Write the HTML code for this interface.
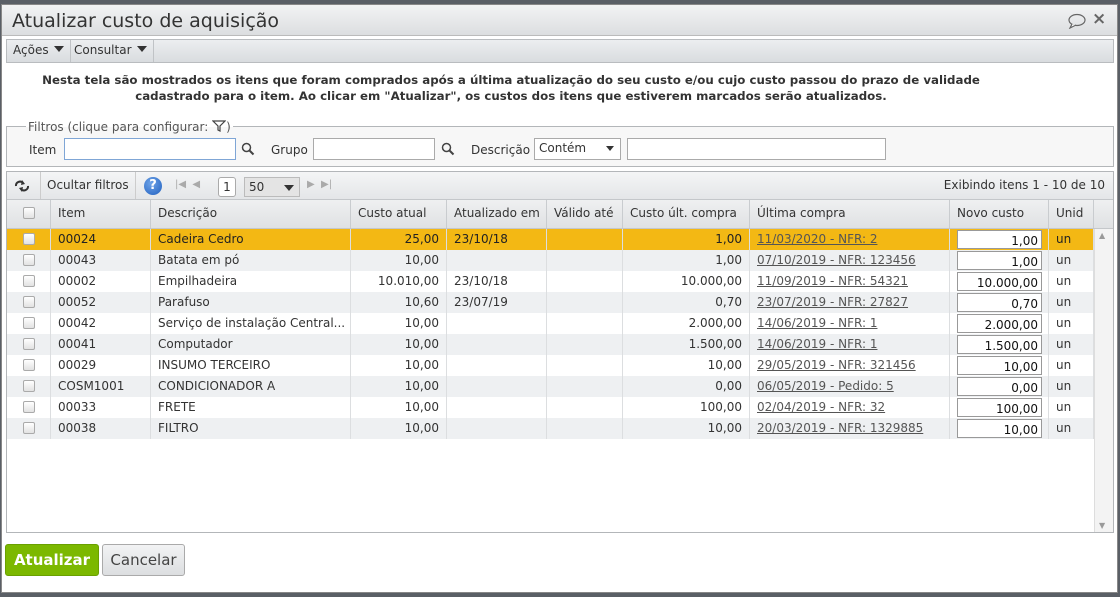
<!DOCTYPE html>
<html><head><meta charset="utf-8"><style>
*{box-sizing:border-box;margin:0;padding:0}
body{width:1120px;height:597px;background:#5a5f66;font-family:"DejaVu Sans","Liberation Sans",sans-serif;font-size:12px;color:#333;position:relative;overflow:hidden}
.dlg{position:absolute;left:1px;top:4px;width:1117px;height:589px;background:#fff;border:1px solid #888;}
.title{position:absolute;left:0;top:0;width:100%;height:31px;background:linear-gradient(#f2f3f4,#dcdee0);border-bottom:1px solid #bbb}
.title span{position:absolute;left:10px;top:5px;font-size:19px;color:#333}
.tb{position:absolute;left:4px;top:34px;width:1108px;height:24px;background:linear-gradient(#eceef0,#d9dcdf);border:1px solid #b9bcbf}
.tb div{position:absolute;top:0;height:22px;line-height:21px;padding:0 6px;border-right:1px solid #c0c3c6}
.tri{display:inline-block;width:0;height:0;border-left:5px solid transparent;border-right:5px solid transparent;border-top:6px solid #333;margin-left:5px;vertical-align:2px}
.intro{position:absolute;left:0;width:1018px;top:67px;text-align:center;font-weight:bold;font-size:11.8px;line-height:16px;color:#333}
.fs{position:absolute;left:4px;top:121px;width:1108px;height:41px;border:1px solid #b3b6b9;background:#f7f7f7}
.fs .lg{position:absolute;left:19px;top:-7px;padding:0 2px;font-size:12px;color:#555;background:linear-gradient(#fff 50%,#f7f7f7 50%)}
input.t{position:absolute;height:22px;border:1px solid #aaa;background:#fff}
.lab{position:absolute;font-size:12px;color:#333}
.grid{position:absolute;left:4px;top:166px;width:1108px;height:362px;border:1px solid #b3b6b9}
.gtb{position:absolute;left:0;top:0;width:100%;height:28px;background:linear-gradient(#f4f5f6,#e4e6e8);border-bottom:1px solid #c4c7ca}
.hdr{position:absolute;left:0;top:28px;width:100%;height:29px;background:linear-gradient(#eff0f1,#dfe1e3);border-bottom:1px solid #c4c7ca}
.c{position:absolute;top:0;height:100%;border-right:1px solid #c9cccf;padding:0 7px;line-height:27px;white-space:nowrap;overflow:hidden}
.row{position:absolute;left:0;width:1087px;height:21px;line-height:20px}
.row .c{line-height:20px;border-right:1px solid #dcdee0}
.r{text-align:right}
.cb{display:inline-block;width:12px;height:12px;border:1px solid #aaa;border-radius:2px;background:linear-gradient(#fff,#e2e2e2);vertical-align:-2px}
a{color:#555;text-decoration:underline}
.nv{position:absolute;left:7px;top:1px;width:85px;height:19px;border:1px solid #999;background:#fff;text-align:right;padding-right:3px;line-height:21px;color:#111}
.btn{position:absolute;top:539px;height:32px;border-radius:3px;font-size:15px;line-height:30px;text-align:center}
</style></head><body>
<div class="dlg">
<div class="title"><span>Atualizar custo de aquisição</span>
<svg style="position:absolute;left:1065px;top:8px" width="20" height="16" viewBox="0 0 20 16"><ellipse cx="10" cy="7" rx="8" ry="5.5" fill="none" stroke="#666" stroke-width="1.2"/><path d="M5 11 L3 15 L9 12" fill="#fff" stroke="#666" stroke-width="1.2"/></svg>
<span style="left:1090px;top:4px;font-size:17px;font-weight:bold;color:#666">×</span></div>
<div class="tb"><div style="left:0">Ações<span class="tri"></span></div><div style="left:61px">Consultar<span class="tri"></span></div></div>
<div class="intro">Nesta tela são mostrados os itens que foram comprados após a última atualização do seu custo e/ou cujo custo passou do prazo de validade<br>cadastrado para o item. Ao clicar em "Atualizar", os custos dos itens que estiverem marcados serão atualizados.</div>
<div class="fs"><span class="lg">Filtros (clique para configurar: <svg width="14" height="12" viewBox="0 0 14 12" style="vertical-align:-1px"><path d="M1 1H13L8 6V11L6 10V6Z" fill="none" stroke="#444" stroke-width="1.2"/></svg>)</span>
<span class="lab" style="left:22px;top:16px">Item</span><input class="t" style="left:57px;top:11px;width:172px;border-color:#7fa6d6">
<svg style="position:absolute;left:234px;top:15px" width="14" height="14" viewBox="0 0 14 14"><circle cx="5.5" cy="5.5" r="4" fill="none" stroke="#444" stroke-width="1.5"/><path d="M8.5 8.5L12.5 12.5" stroke="#444" stroke-width="2"/></svg>
<span class="lab" style="left:264px;top:16px">Grupo</span><input class="t" style="left:306px;top:11px;width:122px">
<svg style="position:absolute;left:434px;top:15px" width="14" height="14" viewBox="0 0 14 14"><circle cx="5.5" cy="5.5" r="4" fill="none" stroke="#444" stroke-width="1.5"/><path d="M8.5 8.5L12.5 12.5" stroke="#444" stroke-width="2"/></svg>
<span class="lab" style="left:464px;top:16px">Descrição</span>
<div style="position:absolute;left:527px;top:11px;width:87px;height:22px;border:1px solid #aaa;background:#fff;padding:2px 4px">Contém<span class="tri" style="position:absolute;right:6px;top:7px;border-left-width:4px;border-right-width:4px;border-top-width:5px"></span></div>
<input class="t" style="left:620px;top:11px;width:259px">
</div>
<div class="grid">
<div class="gtb">
<svg style="position:absolute;left:7px;top:8px" width="16" height="12" viewBox="0 0 16 12"><path d="M2 6a4 4 0 0 1 7-3M14 6a4 4 0 0 1-7 3" fill="none" stroke="#333" stroke-width="2"/><path d="M8 0L11 4L7 5Z M8 12L5 8L9 7Z" fill="#333"/></svg>
<div style="position:absolute;left:33px;top:0;height:27px;border-left:1px solid #ccc;border-right:1px solid #ccc;padding:0 6px;line-height:27px">Ocultar filtros</div>
<div style="position:absolute;left:137px;top:5px;width:18px;height:18px;border-radius:50%;background:radial-gradient(circle at 40% 35%,#6fa4e8,#1f5fbf);color:#fff;font-weight:bold;text-align:center;line-height:18px;font-size:13px">?</div>
<span style="position:absolute;left:168px;top:7px;color:#aaa;font-size:10px">|◀ &nbsp;◀</span>
<div style="position:absolute;left:211px;top:5px;width:18px;height:20px;border:1px solid #aaa;border-radius:3px;background:#fff;text-align:center;line-height:18px;color:#333">1</div>
<div style="position:absolute;left:237px;top:5px;width:56px;height:20px;border:1px solid #bbb;background:#e4e4e4;padding-left:4px;line-height:18px">50<span class="tri" style="position:absolute;right:5px;top:7px"></span></div>
<span style="position:absolute;left:300px;top:7px;color:#aaa;font-size:10px">▶ &nbsp;▶|</span>
<span style="position:absolute;right:8px;top:6px">Exibindo itens 1 - 10 de 10</span>
</div>
<div class="hdr">
<div class="c" style="left:0;width:44px;text-align:center"><span class="cb"></span></div>
<div class="c" style="left:44px;width:100px">Item</div>
<div class="c" style="left:144px;width:200px">Descrição</div>
<div class="c" style="left:344px;width:96px">Custo atual</div>
<div class="c" style="left:440px;width:100px">Atualizado em</div>
<div class="c" style="left:540px;width:76px">Válido até</div>
<div class="c" style="left:616px;width:127px">Custo últ. compra</div>
<div class="c" style="left:743px;width:200px">Última compra</div>
<div class="c" style="left:943px;width:99px">Novo custo</div>
<div class="c" style="left:1042px;width:45px">Unid</div>
</div>
<div style="position:absolute;left:1087px;top:57px;width:19px;height:303px;background:#f3f3f3;border-left:1px solid #ddd"><span style="position:absolute;left:4px;top:2px;font-size:8px;color:#999">▲</span><span style="position:absolute;left:4px;bottom:2px;font-size:8px;color:#999">▼</span></div>
<div id="rows"></div>
</div>
<div class="btn" style="left:3px;width:94px;background:#7cb800;border:1px solid #6aa000;color:#fff;font-weight:bold">Atualizar</div>
<div class="btn" style="left:100px;width:83px;background:linear-gradient(#f2f3f4,#dcdee0);border:1px solid #aaa;color:#444">Cancelar</div>
</div>
<script>
var d=[["00024","Cadeira Cedro","25,00","23/10/18","1,00","11/03/2020 - NFR: 2","1,00"],
["00043","Batata em pó","10,00","","1,00","07/10/2019 - NFR: 123456","1,00"],
["00002","Empilhadeira","10.010,00","23/10/18","10.000,00","11/09/2019 - NFR: 54321","10.000,00"],
["00052","Parafuso","10,60","23/07/19","0,70","23/07/2019 - NFR: 27827","0,70"],
["00042","Serviço de instalação Central...","10,00","","2.000,00","14/06/2019 - NFR: 1","2.000,00"],
["00041","Computador","10,00","","1.500,00","14/06/2019 - NFR: 1","1.500,00"],
["00029","INSUMO TERCEIRO","10,00","","10,00","29/05/2019 - NFR: 321456","10,00"],
["COSM1001","CONDICIONADOR A","10,00","","0,00","06/05/2019 - Pedido: 5","0,00"],
["00033","FRETE","10,00","","100,00","02/04/2019 - NFR: 32","100,00"],
["00038","FILTRO","10,00","","10,00","20/03/2019 - NFR: 1329885","10,00"]];
var h="";d.forEach(function(r,i){var bg=i==0?"#f3b814":(i%2?"#eef0f2":"#fff");var col=i==0?"#222":"#333";
h+='<div class="row" style="top:'+(57+i*21)+'px;background:'+bg+';color:'+col+'">'+
'<div class="c" style="left:0;width:44px;text-align:center"><span class="cb"></span></div>'+
'<div class="c" style="left:44px;width:100px">'+r[0]+'</div>'+
'<div class="c" style="left:144px;width:200px">'+r[1]+'</div>'+
'<div class="c r" style="left:344px;width:96px">'+r[2]+'</div>'+
'<div class="c" style="left:440px;width:100px">'+r[3]+'</div>'+
'<div class="c" style="left:540px;width:76px"></div>'+
'<div class="c r" style="left:616px;width:127px">'+r[4]+'</div>'+
'<div class="c" style="left:743px;width:200px"><a>'+r[5]+'</a></div>'+
'<div class="c" style="left:943px;width:99px"><div class="nv">'+r[6]+'</div></div>'+
'<div class="c" style="left:1042px;width:45px">un</div></div>';});
document.getElementById("rows").innerHTML=h;
</script>
</body></html>
